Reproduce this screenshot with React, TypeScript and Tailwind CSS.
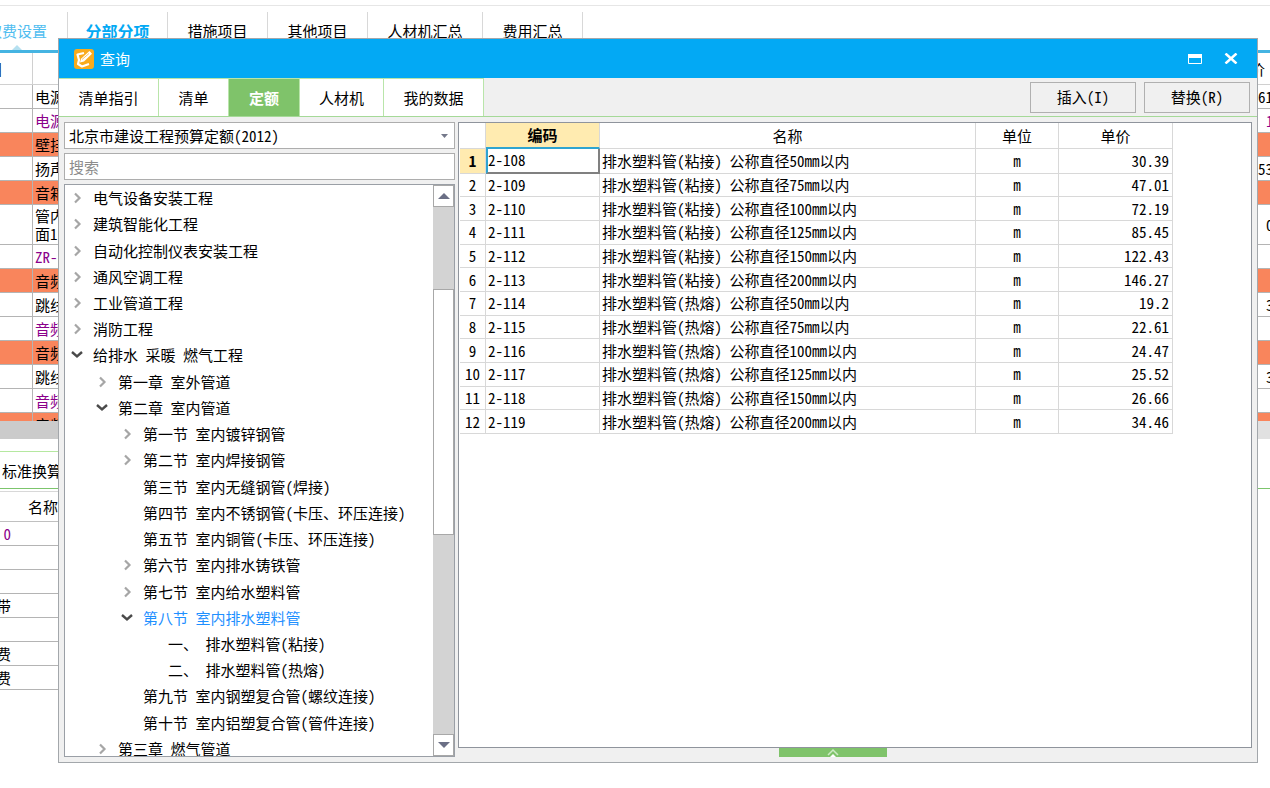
import { useState } from "react";
import clsx from "clsx";

interface TreeItem {
  label: string;
  level: number;
  state?: "open" | "closed";
}

interface QuotaRow {
  code: string;
  name: string;
  unit: string;
  price: string;
}

interface BackRow {
  text: string;
  kind?: "section" | "material";
  value?: string;
  far?: boolean;
  tall?: boolean;
}

const mainTabs = [
  { label: "措施项目", width: "w-[100px]" },
  { label: "其他项目", width: "w-[100px]" },
  { label: "人材机汇总", width: "w-[115px]" },
  { label: "费用汇总", width: "w-[100px]" },
];

const backRows: BackRow[] = [
  { text: "电源", value: "61" },
  { text: "电源", kind: "material", value: "1", far: true },
  { text: "壁挂", kind: "section" },
  { text: "扬声", value: "53" },
  { text: "音箱", kind: "section" },
  { text: "管内\n面1", value: "0", far: true, tall: true },
  { text: "ZR-", kind: "material" },
  { text: "音频", kind: "section" },
  { text: "跳线", value: "3", far: true },
  { text: "音频", kind: "material" },
  { text: "音频", kind: "section" },
  { text: "跳线", value: "3", far: true },
  { text: "音频", kind: "material" },
  { text: "音频", kind: "section" },
];

const detailRows = ["0", "", "", "带", "", "费", "费"];

const dialogTabs = [
  { label: "清单指引", width: "w-[100px]" },
  { label: "清单", width: "w-[70px]" },
  { label: "定额", width: "w-[71px]" },
  { label: "人材机", width: "w-[84px]" },
  { label: "我的数据", width: "w-[100px]" },
];

const treeItems: TreeItem[] = [
  { label: "电气设备安装工程", level: 0, state: "closed" },
  { label: "建筑智能化工程", level: 0, state: "closed" },
  { label: "自动化控制仪表安装工程", level: 0, state: "closed" },
  { label: "通风空调工程", level: 0, state: "closed" },
  { label: "工业管道工程", level: 0, state: "closed" },
  { label: "消防工程", level: 0, state: "closed" },
  { label: "给排水 采暖 燃气工程", level: 0, state: "open" },
  { label: "第一章 室外管道", level: 1, state: "closed" },
  { label: "第二章 室内管道", level: 1, state: "open" },
  { label: "第一节 室内镀锌钢管", level: 2, state: "closed" },
  { label: "第二节 室内焊接钢管", level: 2, state: "closed" },
  { label: "第三节 室内无缝钢管(焊接)", level: 2 },
  { label: "第四节 室内不锈钢管(卡压、环压连接)", level: 2 },
  { label: "第五节 室内铜管(卡压、环压连接)", level: 2 },
  { label: "第六节 室内排水铸铁管", level: 2, state: "closed" },
  { label: "第七节 室内给水塑料管", level: 2, state: "closed" },
  { label: "第八节 室内排水塑料管", level: 2, state: "open" },
  { label: "一、 排水塑料管(粘接)", level: 3 },
  { label: "二、 排水塑料管(热熔)", level: 3 },
  { label: "第九节 室内钢塑复合管(螺纹连接)", level: 2 },
  { label: "第十节 室内铝塑复合管(管件连接)", level: 2 },
  { label: "第三章 燃气管道", level: 1, state: "closed" },
];

const indents = ["pl-[6px]", "pl-[31px]", "pl-[56px]", "pl-[81px]"];

const quotaRows: QuotaRow[] = [
  { code: "2-108", name: "排水塑料管(粘接) 公称直径50mm以内", unit: "m", price: "30.39" },
  { code: "2-109", name: "排水塑料管(粘接) 公称直径75mm以内", unit: "m", price: "47.01" },
  { code: "2-110", name: "排水塑料管(粘接) 公称直径100mm以内", unit: "m", price: "72.19" },
  { code: "2-111", name: "排水塑料管(粘接) 公称直径125mm以内", unit: "m", price: "85.45" },
  { code: "2-112", name: "排水塑料管(粘接) 公称直径150mm以内", unit: "m", price: "122.43" },
  { code: "2-113", name: "排水塑料管(粘接) 公称直径200mm以内", unit: "m", price: "146.27" },
  { code: "2-114", name: "排水塑料管(热熔) 公称直径50mm以内", unit: "m", price: "19.2" },
  { code: "2-115", name: "排水塑料管(热熔) 公称直径75mm以内", unit: "m", price: "22.61" },
  { code: "2-116", name: "排水塑料管(热熔) 公称直径100mm以内", unit: "m", price: "24.47" },
  { code: "2-117", name: "排水塑料管(热熔) 公称直径125mm以内", unit: "m", price: "25.52" },
  { code: "2-118", name: "排水塑料管(热熔) 公称直径150mm以内", unit: "m", price: "26.66" },
  { code: "2-119", name: "排水塑料管(热熔) 公称直径200mm以内", unit: "m", price: "34.46" },
];

function TreeArrow({ state }: { state?: TreeItem["state"] }) {
  return (
    <svg className="h-3 w-3 shrink-0" viewBox="0 0 12 12" fill="none" aria-hidden="true">
      {state === "closed" && <path d="M4 1.5 8.5 6 4 10.5" stroke="#a6a6a6" strokeWidth="2.2" />}
      {state === "open" && <path d="M1 3 6 7.5 11 3" stroke="#4a4a4a" strokeWidth="2.4" />}
    </svg>
  );
}

function Workspace() {
  return (
    <div>
      <div className="h-[6px] border-b border-[#e6e6e6]" />
      <nav className="flex h-[47px] items-stretch border-b-[3px] border-[#45b4e2] pt-[6px]">
        <a
          href="#fees"
          className="relative flex w-[68px] shrink-0 items-center justify-end border-r border-[#d8d8d8] pr-5 text-[#4fbdf0]"
        >
          <span className="whitespace-nowrap">取费设置</span>
          <svg className="absolute bottom-0 left-3 h-[5px] w-[10px]" viewBox="0 0 10 5" aria-hidden="true">
            <path d="M0 5 5 0l5 5z" fill="#b5e0f0" />
          </svg>
        </a>
        <a
          href="#parts"
          className="flex w-[100px] items-center justify-center border-r border-[#d8d8d8] text-base font-bold text-[#03a9f4]"
        >
          分部分项
        </a>
        {mainTabs.map((tab) => (
          <a
            key={tab.label}
            href="#tab"
            className={clsx("flex items-center justify-center border-r border-[#d8d8d8]", tab.width)}
          >
            {tab.label}
          </a>
        ))}
      </nav>

      <div className="h-[368px] overflow-hidden">
        <div className="flex h-8 items-center border-b border-[#d0d0d0]">
          <div className="flex h-full w-[33px] items-center border-r border-[#d0d0d0]">
            <span className="flex w-[3px] justify-end">目</span>
          </div>
          <div className="flex-1" />
          <div className="w-5">价</div>
        </div>
        {backRows.map((row, i) => (
          <div
            key={i}
            className={clsx(
              "flex border-b border-[#b4b4b4]",
              row.tall ? "h-10" : "h-6",
              row.kind === "section" && "bg-[#f9855c]",
              row.kind === "material" && "text-[#8b008b]"
            )}
          >
            <div className="w-[33px] border-r border-[#b4b4b4]" />
            <div className="flex flex-1 items-center whitespace-pre-line pl-[2px] leading-[18px]">{row.text}</div>
            <div className={clsx("flex w-5 items-center", row.far ? "pl-4" : "pl-2")}>{row.value}</div>
          </div>
        ))}
      </div>
      <div className="flex h-[18px]">
        <div className="flex-1 bg-[#cbcbcb]" />
        <div className="w-[270px] bg-[#e1e1e1]" />
      </div>

      <div className="mt-3 flex h-[38px] items-center border-b border-[#7cc56c]">
        <div className="flex h-full w-[300px] items-center border-t border-[#b5e8a0] pl-[2px] pt-[2px]">标准换算</div>
      </div>
      <div className="mt-[2px] w-[300px] border-t border-[#d8d8d8]">
        <div className="flex h-[30px] items-center border-b border-[#c0c0c0] pl-7">名称</div>
        {detailRows.map((text, i) => (
          <div key={i} className="flex h-6 items-center border-b border-[#b4b4b4]">
            <span className={clsx("flex w-[11px] justify-end", i === 0 && "text-[#8b008b]")}>{text}</span>
          </div>
        ))}
      </div>
    </div>
  );
}

function TitleBar() {
  return (
    <header className="flex h-[39px] shrink-0 items-center bg-[#03a9f4] pl-[15px] pr-[18px] text-white">
      <svg className="mr-[6px] h-5 w-5" viewBox="0 0 20 20" fill="none" aria-hidden="true">
        <rect width="20" height="20" rx="3" fill="#f9ab1c" />
        <path d="M10 4 3.5 5.5 5 11l-1 4 4 2.500 7-2.500" stroke="#fff" strokeWidth="2.2" strokeLinejoin="round" />
        <path d="m15.500 2 2.500 2.800-8 7.700-4 1 1-3.800z" fill="#fff" />
        <path d="M8 10.500 15 4.500" stroke="#f9ab1c" strokeWidth=".7" />
      </svg>
      <h1>查询</h1>
      <div className="ml-auto flex items-center gap-5">
        <button type="button" aria-label="最大化" className="flex h-4 w-4 items-center justify-center">
          <svg className="h-[10px] w-[14px]" viewBox="0 0 14 10" fill="none" aria-hidden="true">
            <path d="M.5.5h13v9H.5z" stroke="#fff" />
            <path d="M0 0h14v4H0z" fill="#fff" />
          </svg>
        </button>
        <button type="button" aria-label="关闭" className="flex h-4 w-4 items-center justify-center">
          <svg className="h-[11px] w-[14px]" viewBox="0 0 14 11" fill="none" aria-hidden="true">
            <path d="M1.5.5l11 10M12.5.5l-11 10" stroke="#fff" strokeWidth="2.5" />
          </svg>
        </button>
      </div>
    </header>
  );
}

function TreePane() {
  const [selected, setSelected] = useState("第八节 室内排水塑料管");

  return (
    <div className="flex w-[391px] shrink-0 flex-col">
      <div className="relative mb-1 h-[27px] shrink-0">
        <select
          aria-label="定额库"
          className="h-full w-full appearance-none border border-[#adadad] bg-white pl-1 outline-none"
        >
          <option>北京市建设工程预算定额(2012)</option>
        </select>
        <svg className="pointer-events-none absolute right-[7px] top-3 h-1 w-[7px]" viewBox="0 0 7 4" aria-hidden="true">
          <path d="M0 0h7L3.5 4z" fill="#74788a" />
        </svg>
      </div>
      <input
        type="text"
        aria-label="搜索"
        placeholder="搜索"
        className="mb-1 h-[27px] shrink-0 border border-[#adadad] bg-white pl-1 leading-5 outline-none placeholder:text-[#8c8c8c]"
      />
      <div className="flex min-h-0 flex-1 border border-[#9a9fa6] bg-white">
        <div className="flex-1 overflow-hidden">
          <ul className="grid h-[577px] auto-rows-fr">
            {treeItems.map((item) => (
              <li key={item.label}>
                <button
                  type="button"
                  onClick={() => setSelected(item.label)}
                  className={clsx(
                    "flex h-full w-full items-center gap-[10px] whitespace-pre text-left",
                    indents[item.level],
                    item.label === selected && "text-[#1e90ff]"
                  )}
                >
                  <TreeArrow state={item.state} />
                  {item.label}
                </button>
              </li>
            ))}
          </ul>
        </div>
        <div className="flex w-[21px] flex-col bg-[#d3d3d3]">
          <button
            type="button"
            aria-label="向上滚动"
            className="flex h-[22px] shrink-0 items-center justify-center border border-[#a8a8a8] bg-white"
          >
            <svg className="h-[6px] w-3" viewBox="0 0 12 6" aria-hidden="true">
              <path d="M0 6 6 0l6 6z" fill="#6b6f85" />
            </svg>
          </button>
          <div className="mt-[82px] h-[246px] border border-[#a8a8a8] bg-white" />
          <button
            type="button"
            aria-label="向下滚动"
            className="mt-auto flex h-[22px] shrink-0 items-center justify-center border border-[#a8a8a8] bg-white"
          >
            <svg className="h-[6px] w-3" viewBox="0 0 12 6" aria-hidden="true">
              <path d="M0 0h12L6 6z" fill="#6b6f85" />
            </svg>
          </button>
        </div>
      </div>
    </div>
  );
}

function QuotaTable() {
  return (
    <div className="flex-1 overflow-hidden border border-[#8f949c] bg-white pl-px">
      <table className="h-[311px] w-[713px] table-fixed border-separate border-spacing-0">
        <thead>
          <tr className="h-[26px]">
            <th className="w-[26px] border-b border-r border-[#d8d8d8]" />
            <th className="w-[114px] border-b-2 border-r border-b-[#2fa4d0] border-r-[#d8d8d8] bg-[#ffebb0] p-0 font-bold">
              编码
            </th>
            <th className="w-[376px] border-b border-r border-[#d8d8d8] p-0 font-normal">名称</th>
            <th className="w-[83px] border-b border-r border-[#d8d8d8] p-0 font-normal">单位</th>
            <th className="w-[114px] border-b border-r border-[#d8d8d8] p-0 font-normal">单价</th>
          </tr>
        </thead>
        <tbody>
          {quotaRows.map((row, i) => (
            <tr key={row.code}>
              <td
                className={clsx(
                  "border-b border-r border-[#d8d8d8] p-0 text-center",
                  i === 0 && "bg-[#ffebb0] font-bold"
                )}
              >
                {i + 1}
              </td>
              <td
                className={clsx(
                  "p-0",
                  i === 0
                    ? "border-b-2 border-l-2 border-r-2 border-b-[#808080] border-l-[#2fa4d0] border-r-[#808080]"
                    : "border-b border-r border-[#d8d8d8] pl-[2px]"
                )}
              >
                {row.code}
              </td>
              <td className="border-b border-r border-[#d8d8d8] p-0 pl-[2px]">{row.name}</td>
              <td className="border-b border-r border-[#d8d8d8] p-0 text-center">{row.unit}</td>
              <td className="border-b border-r border-[#d8d8d8] p-0 pr-[3px] text-right">{row.price}</td>
            </tr>
          ))}
        </tbody>
      </table>
    </div>
  );
}

function QueryDialog() {
  const [activeTab, setActiveTab] = useState("定额");

  return (
    <section
      role="dialog"
      aria-label="查询"
      className="absolute bottom-[25px] left-[58px] right-[12px] top-[38px] flex flex-col border border-[#a3a7ab] bg-[#f0f0f0]"
    >
      <TitleBar />
      <div className="flex h-[39px] shrink-0 items-stretch border-b border-[#a5d998]">
        {dialogTabs.map((tab) => (
          <button
            key={tab.label}
            type="button"
            onClick={() => setActiveTab(tab.label)}
            className={clsx(
              "border-r border-t border-[#b9e5aa] pt-px",
              tab.width,
              tab.label === activeTab ? "bg-[#7fc36a] font-bold text-white" : "bg-white"
            )}
          >
            {tab.label}
          </button>
        ))}
        <div className="ml-auto flex items-center gap-2 pr-[7px]">
          <button type="button" className="h-[31px] w-[106px] border border-[#b0b0b0] bg-[#f0f0f0]">
            插入(I)
          </button>
          <button type="button" className="h-[31px] w-[106px] border border-[#b0b0b0] bg-[#f0f0f0]">
            替换(R)
          </button>
        </div>
      </div>
      <div className="flex min-h-0 flex-1 gap-[3px] py-[5px] pl-[5px] pr-[5px]">
        <TreePane />
        <div className="flex flex-1 flex-col">
          <QuotaTable />
          <div className="flex justify-center pr-11">
            <button type="button" aria-label="展开" className="flex h-[9px] w-[108px] justify-center bg-[#7fc36a]">
              <svg className="h-[9px] w-3" viewBox="0 0 12 9" fill="none" aria-hidden="true">
                <path d="M1 7 6 2l5 5" stroke="#cdeac4" strokeWidth="1.5" />
                <path d="M3 9 6 6l3 3z" fill="#fff" />
              </svg>
            </button>
          </div>
        </div>
      </div>
    </section>
  );
}

export default function App() {
  return (
    <main className="relative h-screen min-h-[600px] overflow-hidden bg-white font-['Noto_Sans_Mono_CJK_SC','Noto_Sans_CJK_SC',sans-serif] text-[15px] leading-5 text-black">
      <Workspace />
      <QueryDialog />
    </main>
  );
}
